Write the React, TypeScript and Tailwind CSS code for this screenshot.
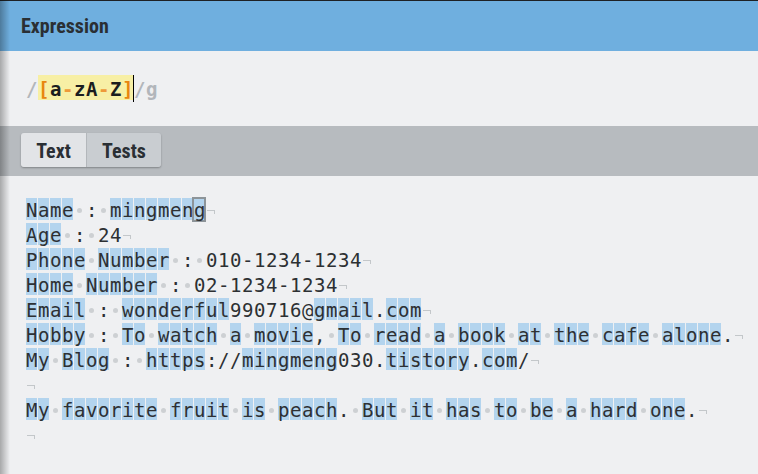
import React from "react";

const lines = [
  "Name : mingmeng",
  "Age : 24",
  "Phone Number : 010-1234-1234",
  "Home Number : 02-1234-1234",
  "Email : wonderful990716@gmail.com",
  "Hobby : To watch a movie, To read a book at the cafe alone.",
  "My Blog : https://mingmeng030.tistory.com/",
  "",
  "My favorite fruit is peach. But it has to be a hard one.",
  "",
];

const mono = { fontFamily: '"DejaVu Sans Mono", "Liberation Mono", monospace' };

function Cell({ c, box }: { c: string; box?: boolean }) {
  if (c === " ") {
    return (
      <span className="relative block h-[25px] w-[12px] shrink-0">
        <span className="absolute left-[3px] top-[11px] h-[5px] w-[5px] rounded-full bg-[#cdd0d3]" />
      </span>
    );
  }
  const isLetter = /[a-zA-Z]/.test(c);
  return (
    <span className="relative block h-[25px] w-[12px] shrink-0">
      {isLetter && <span className="absolute left-0 top-[1px] h-[22px] w-[11px] bg-[#b3d4ee]" />}
      {box && <span className="absolute -left-[2px] top-0 h-[25px] w-[14px] border-2 border-[#8d9499]" />}
      <span className="relative block leading-[27px]">{c}</span>
    </span>
  );
}

function Eol() {
  return (
    <span className="relative block h-[25px] w-[12px] shrink-0">
      <span className="absolute left-[1px] top-[13px] h-[4px] w-[8px] border-r border-t border-[#c3c7ca]" />
    </span>
  );
}

function ExprChar({ c, color }: { c: string; color: string }) {
  return <span className={`block w-[12px] shrink-0 ${color}`}>{c}</span>;
}

export default function App() {
  const cond = { fontFamily: '"Liberation Sans Narrow", "Roboto Condensed", Roboto, sans-serif' };
  return (
    <div className="relative h-[474px] w-[758px] overflow-hidden bg-[#eff0f2]">
      <div className="h-px bg-[#1e2124]" />
      <div className="flex h-[50px] items-center bg-[#6fafdf] pl-[21px]">
        <span className="text-[20px] font-bold text-[#2a2f34]" style={cond}>
          Expression
        </span>
      </div>
      <div className="h-[75px] pl-[26px] pt-[24px]">
        <div className="flex h-[25px] text-[19px] font-bold leading-[28px]" style={mono}>
          <ExprChar c="/" color="text-[#b2b6bb]" />
          <span className="relative flex bg-[#f7efa5]">
            <ExprChar c="[" color="text-[#e8850f]" />
            <ExprChar c="a" color="text-[#1b1d1f]" />
            <ExprChar c="-" color="text-[#ee9a3a]" />
            <ExprChar c="z" color="text-[#1b1d1f]" />
            <ExprChar c="A" color="text-[#1b1d1f]" />
            <ExprChar c="-" color="text-[#ee9a3a]" />
            <ExprChar c="Z" color="text-[#1b1d1f]" />
            <ExprChar c="]" color="text-[#e8850f]" />
          </span>
          <span className="relative block w-0">
            <span className="absolute -left-[1px] top-0 h-[27px] w-px bg-black" />
          </span>
          <ExprChar c="/" color="text-[#b2b6bb]" />
          <ExprChar c="g" color="text-[#b2b6bb]" />
        </div>
      </div>
      <div className="h-[50px] bg-[#b7bbbf] pl-[21px] pt-[7px]">
        <div className="flex h-[34px] w-max overflow-hidden rounded-[3px] shadow-[0_1px_2px_rgba(0,0,0,0.3)]" style={cond}>
          <div className="flex w-[65px] items-center justify-center bg-[#e2e4e7] pt-[2px] text-[20px] font-bold text-[#2a2f34]">
            Text
          </div>
          <div className="flex w-[75px] items-center justify-center border-l border-[#b3b7bb] bg-[#c9cdd1] pt-[2px] text-[20px] font-bold text-[#2a2f34]">
            Tests
          </div>
        </div>
      </div>
      <div className="pl-[26px] pt-[21px] text-[19px] text-[#2d3033]" style={mono}>
        {lines.map((l, li) => (
          <div key={li} className="flex h-[25px]">
            {l.split("").map((c, i) => (
              <Cell key={i} c={c} box={li === 0 && i === 14} />
            ))}
            <Eol />
          </div>
        ))}
      </div>
      <div className="pointer-events-none absolute inset-y-0 left-0 w-[10px] bg-gradient-to-r from-black/30 to-transparent" />
    </div>
  );
}
